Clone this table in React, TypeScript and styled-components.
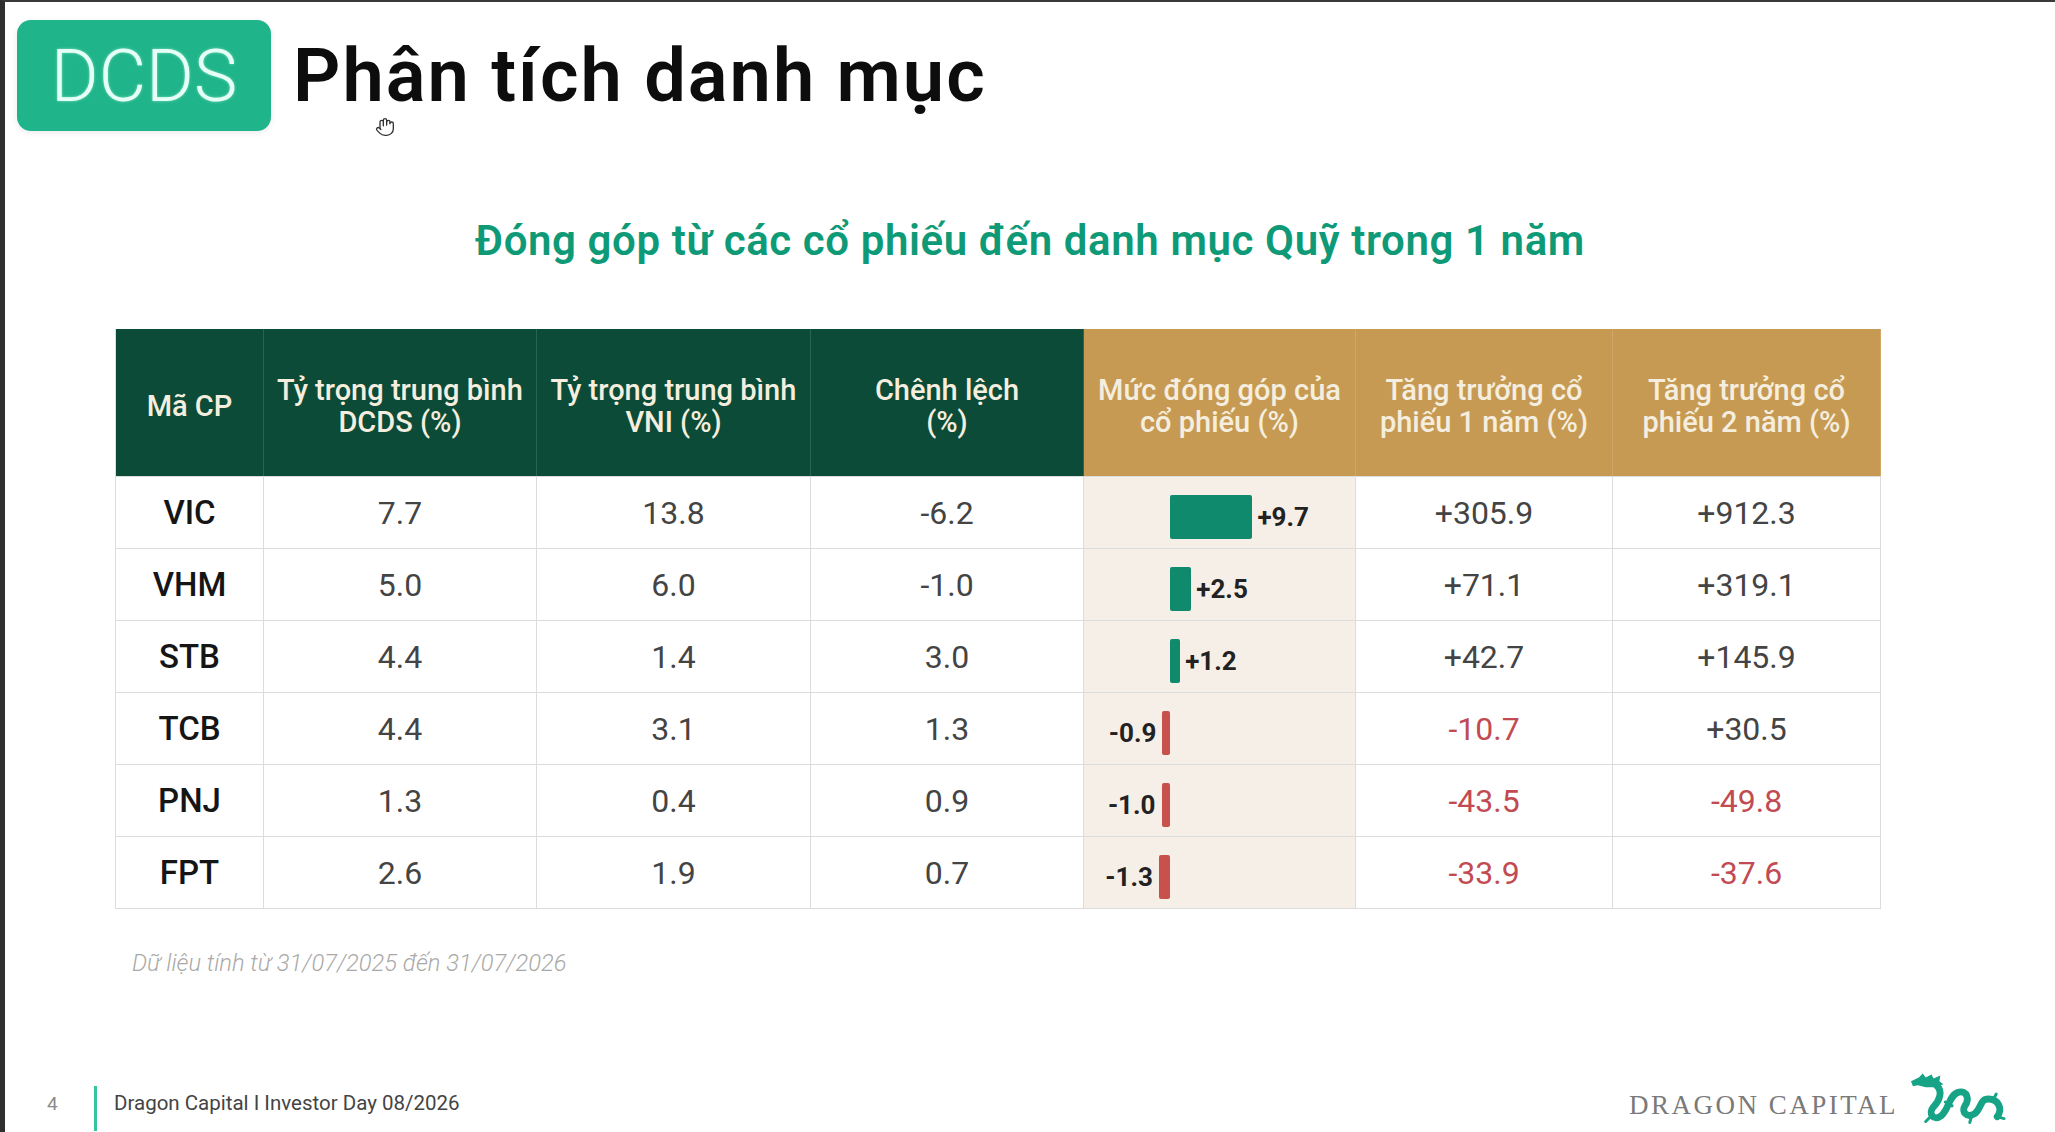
import { createGlobalStyle } from 'styled-components';
import styled from 'styled-components';
import { Hand } from 'lucide-react';

interface StockRow {
    code: string;
    dcds: string;
    vni: string;
    diff: string;
    contrib: number;
    growth1: string;
    growth2: string;
}

const rows: StockRow[] = [
    { code: 'VIC', dcds: '7.7', vni: '13.8', diff: '-6.2', contrib: 9.7, growth1: '+305.9', growth2: '+912.3' },
    { code: 'VHM', dcds: '5.0', vni: '6.0', diff: '-1.0', contrib: 2.5, growth1: '+71.1', growth2: '+319.1' },
    { code: 'STB', dcds: '4.4', vni: '1.4', diff: '3.0', contrib: 1.2, growth1: '+42.7', growth2: '+145.9' },
    { code: 'TCB', dcds: '4.4', vni: '3.1', diff: '1.3', contrib: -0.9, growth1: '-10.7', growth2: '+30.5' },
    { code: 'PNJ', dcds: '1.3', vni: '0.4', diff: '0.9', contrib: -1.0, growth1: '-43.5', growth2: '-49.8' },
    { code: 'FPT', dcds: '2.6', vni: '1.9', diff: '0.7', contrib: -1.3, growth1: '-33.9', growth2: '-37.6' },
];

const headers: { label: string[]; tone: 'green' | 'gold' }[] = [
    { label: ['Mã CP'], tone: 'green' },
    { label: ['Tỷ trọng trung bình', 'DCDS (%)'], tone: 'green' },
    { label: ['Tỷ trọng trung bình', 'VNI (%)'], tone: 'green' },
    { label: ['Chênh lệch', '(%)'], tone: 'green' },
    { label: ['Mức đóng góp của', 'cổ phiếu (%)'], tone: 'gold' },
    { label: ['Tăng trưởng cổ', 'phiếu 1 năm (%)'], tone: 'gold' },
    { label: ['Tăng trưởng cổ', 'phiếu 2 năm (%)'], tone: 'gold' },
];

const BAR_SCALE = 8.5;

const GlobalStyle = createGlobalStyle`
    html, body {
        margin: 0;
        padding: 0;
        background: #ffffff;
    }
    body {
        font-family: Roboto, 'Noto Sans', sans-serif;
    }
`;

const Dragon = () => (
    <svg width="98" height="54" viewBox="0 0 100 54" fill="none">
        <path
            d="M1 9 L9 5 L13 1 L16 5 L22 2 L24 6 L31 3 L30 9 L34 12 L26 15 L16 15 L8 13 L3 14 Z"
            fill="#17a386"
        />
        <g stroke="#17a386" strokeWidth="7" strokeLinecap="round" strokeLinejoin="round">
            <path d="M27 13 C 34 19, 30 29, 24 35 C 18 42, 24 50, 32 44 C 40 37, 40 22, 50 20 C 58 18, 61 27, 56 34 C 52 40, 58 47, 66 42 C 73 37, 71 27, 80 27 C 90 27, 95 37, 89 45" />
        </g>
        <g stroke="#17a386" strokeWidth="3" strokeLinecap="round">
            <path d="M36 30 L43 34" />
            <path d="M22 44 L16 50" />
            <path d="M63 44 L61 51" />
            <path d="M84 29 L88 22" />
            <path d="M89 45 L96 47" />
        </g>
    </svg>
);

const App = () => (
    <>
        <GlobalStyle />
        <Slide>
            <TitleBar>
                <Badge>DCDS</Badge>
                <Title>Phân tích danh mục</Title>
            </TitleBar>
            <Cursor>
                <Hand size={20} strokeWidth={1.6} color="#333" fill="#fff" />
            </Cursor>

            <Subtitle>Đóng góp từ các cổ phiếu đến danh mục Quỹ trong 1 năm</Subtitle>

            <Table>
                {headers.map((h, i) => (
                    <HeadCell key={i} $tone={h.tone}>
                        {h.label.map((line) => (
                            <span key={line}>{line}</span>
                        ))}
                    </HeadCell>
                ))}
                {rows.map((r) => (
                    <Row key={r.code}>
                        <CodeCell>{r.code}</CodeCell>
                        <NumCell>{r.dcds}</NumCell>
                        <NumCell>{r.vni}</NumCell>
                        <NumCell>{r.diff}</NumCell>
                        <BarCell>
                            <NegSide>
                                {r.contrib < 0 && (
                                    <>
                                        <BarLabel>{r.contrib.toFixed(1)}</BarLabel>
                                        <Bar $neg $w={Math.abs(r.contrib) * BAR_SCALE} />
                                    </>
                                )}
                            </NegSide>
                            <PosSide>
                                {r.contrib > 0 && (
                                    <>
                                        <Bar $w={r.contrib * BAR_SCALE} />
                                        <BarLabel>+{r.contrib.toFixed(1)}</BarLabel>
                                    </>
                                )}
                            </PosSide>
                        </BarCell>
                        <NumCell $neg={r.growth1.startsWith('-')}>{r.growth1}</NumCell>
                        <NumCell $neg={r.growth2.startsWith('-')}>{r.growth2}</NumCell>
                    </Row>
                ))}
            </Table>

            <Note>Dữ liệu tính từ 31/07/2025 đến 31/07/2026</Note>

            <Footer>
                <FooterLeft>
                    <PageNo>4</PageNo>
                    <Divider />
                    <FooterText>Dragon Capital I Investor Day 08/2026</FooterText>
                </FooterLeft>
                <Brand>
                    <BrandName>DRAGON CAPITAL</BrandName>
                    <Dragon />
                </Brand>
            </Footer>
        </Slide>
    </>
);

export default App;

const Slide = styled.div`
    position: relative;
    width: 2055px;
    height: 1132px;
    box-sizing: border-box;
    border-left: 5px solid #2f2f2f;
    border-top: 2px solid #3a3a3a;
    background: #ffffff;
    display: flex;
    flex-direction: column;
    overflow: hidden;
`;

const TitleBar = styled.div`
    display: flex;
    align-items: center;
    gap: 22px;
    padding: 18px 0 0 12px;
`;

const Badge = styled.div`
    width: 254px;
    height: 111px;
    border-radius: 14px;
    background: #1fb489;
    color: #e6fff6;
    font-family: Roboto, sans-serif;
    font-weight: 300;
    font-size: 73px;
    display: flex;
    align-items: center;
    justify-content: center;
    text-shadow: 0 0 3px rgba(200, 255, 235, 0.6);
    box-shadow: 0 2px 6px rgba(0, 0, 0, 0.08);
`;

const Title = styled.h1`
    margin: 0;
    font-family: Roboto, sans-serif;
    font-weight: 600;
    font-size: 74px;
    color: #0d0d0d;
    letter-spacing: 2px;
`;

const Cursor = styled.div`
    position: absolute;
    left: 370px;
    top: 115px;
    line-height: 0;
`;

const Subtitle = styled.h2`
    margin: 86px 0 0;
    text-align: center;
    font-family: Roboto, sans-serif;
    font-weight: 600;
    font-size: 42px;
    line-height: 48px;
    letter-spacing: 0.6px;
    color: #0f9a77;
`;

const Table = styled.div`
    margin: 64px 0 0 110px;
    width: 1765px;
    display: grid;
    grid-template-columns: 148px 273px 274px 273px 272px 257px 268px;
    border-left: 1px solid #dcdcdc;
    border-bottom: 1px solid #dcdcdc;
`;

const HeadCell = styled.div<{ $tone: 'green' | 'gold' }>`
    height: 147px;
    display: flex;
    flex-direction: column;
    align-items: center;
    justify-content: center;
    background: ${(p) => (p.$tone === 'green' ? '#0b4b37' : '#c69a53')};
    border-right: 1px solid ${(p) => (p.$tone === 'green' ? '#2a6351' : '#cfa868')};
    color: #f5eedf;
    font-family: Roboto, sans-serif;
    font-weight: 500;
    font-size: 29px;
    line-height: 32px;
    text-align: center;
    padding-top: 6px;
    box-sizing: border-box;
`;

const Row = styled.div`
    display: contents;
`;

const Cell = styled.div`
    height: 72px;
    box-sizing: border-box;
    border-right: 1px solid #dcdcdc;
    border-top: 1px solid #dcdcdc;
    display: flex;
    align-items: center;
    justify-content: center;
`;

const CodeCell = styled(Cell)`
    font-family: Roboto, sans-serif;
    font-weight: 500;
    font-size: 33px;
    color: #151515;
`;

const NumCell = styled(Cell)<{ $neg?: boolean }>`
    font-family: Roboto, sans-serif;
    font-weight: 400;
    font-size: 32px;
    color: ${(p) => (p.$neg ? '#c24a52' : '#444444')};
`;

const BarCell = styled(Cell)`
    justify-content: flex-start;
    background: #f6efe8;
    padding-top: 8px;
`;

const NegSide = styled.div`
    width: 86px;
    display: flex;
    align-items: center;
    justify-content: flex-end;
    gap: 6px;
`;

const PosSide = styled.div`
    flex: 1;
    display: flex;
    align-items: center;
    gap: 5px;
`;

const Bar = styled.div<{ $w: number; $neg?: boolean }>`
    width: ${(p) => p.$w}px;
    height: 44px;
    background: ${(p) => (p.$neg ? '#c9514b' : '#0f8a6c')};
    border-radius: 2px;
`;

const BarLabel = styled.span`
    font-family: Roboto, sans-serif;
    font-weight: 700;
    font-size: 26px;
    color: #222222;
`;

const Note = styled.div`
    margin: 40px 0 0 127px;
    font-family: Roboto, sans-serif;
    font-style: italic;
    font-weight: 300;
    font-size: 23.7px;
    color: #a9a9a9;
`;

const Footer = styled.div`
    margin-top: auto;
    height: 58px;
    display: flex;
    align-items: center;
    justify-content: space-between;
    padding: 0 47px 0 42px;
`;

const FooterLeft = styled.div`
    display: flex;
    align-items: center;
    height: 100%;
`;

const PageNo = styled.span`
    width: 47px;
    font-family: Roboto, sans-serif;
    font-size: 19px;
    color: #8a8a8a;
`;

const Divider = styled.div`
    width: 3px;
    height: 45px;
    margin-top: 10px;
    background: #33c4a2;
    margin-right: 17px;
`;

const FooterText = styled.span`
    font-family: Roboto, sans-serif;
    font-size: 20.5px;
    color: #444444;
`;

const Brand = styled.div`
    display: flex;
    align-items: center;
    gap: 12px;
    margin-top: -8px;
`;

const BrandName = styled.span`
    font-family: 'Liberation Serif', serif;
    font-size: 27px;
    letter-spacing: 2.5px;
    color: #7a7a7a;
    margin-top: 12px;
`;
